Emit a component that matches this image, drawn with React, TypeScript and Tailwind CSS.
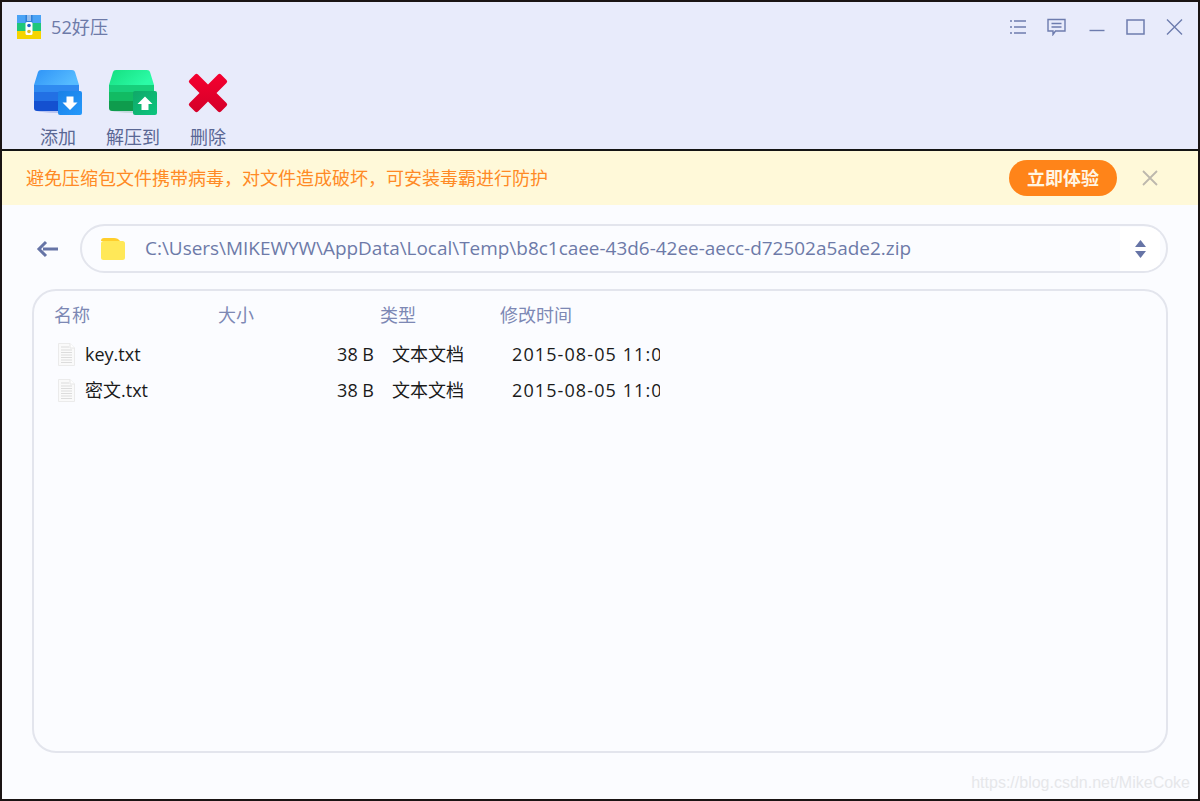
import React from "react";

const font = { fontFamily: '"Open Sans", "Noto Sans CJK SC", sans-serif' };

function AppLogo() {
  return (
    <svg width="24" height="24" viewBox="0 0 24 24">
      <rect x="0" y="0" width="24" height="8" fill="#4aa3f5" />
      <rect x="0" y="8" width="24" height="8" fill="#1fc77a" />
      <rect x="0" y="16" width="24" height="8" fill="#f5d400" />
      <rect x="8.5" y="0" width="7" height="8" fill="#2f7fd8" />
      <path d="M10 1h4M10 3h4M10 5h4" stroke="#ffffff" strokeWidth="1" />
      <rect x="8.5" y="7" width="7" height="13" rx="1.5" fill="#ffffff" />
      <circle cx="12" cy="10.5" r="1.8" fill="#2366c9" />
      <circle cx="12" cy="16.5" r="1.8" fill="#d9b92a" />
    </svg>
  );
}

function BoxIcon({ kind }: { kind: "add" | "extract" }) {
  const add = kind === "add";
  const id = kind;
  return (
    <svg width="50" height="48" viewBox="-1 0 50 48">
      <defs>
        <linearGradient id={id + "Top"} x1="0" y1="0" x2="1" y2="0.4">
          <stop offset="0" stopColor={add ? "#2e93f7" : "#16df80"} />
          <stop offset="1" stopColor={add ? "#56bbff" : "#2bfba6"} />
        </linearGradient>
        <linearGradient id={id + "Badge"} x1="0" y1="0" x2="1" y2="1">
          <stop offset="0" stopColor={add ? "#1a80e6" : "#10a868"} />
          <stop offset="1" stopColor={add ? "#2599fb" : "#0cc57e"} />
        </linearGradient>
      </defs>
      <ellipse cx="24" cy="40" rx="22" ry="3" fill={add ? "#b6c2f0" : "#c3d8dc"} />
      <path d="M4 2Q4.500 0 7 0H38Q40.500 0 41 2L45 15H0Z" fill={`url(#${id}Top)`} />
      <rect x="0" y="15" width="45" height="8" fill={add ? "#2f8af0" : "#17cf7b"} />
      <rect x="0" y="22" width="45" height="10" fill={add ? "#2270e4" : "#12bb63"} />
      <path d="M0 31H45V41H3Q0 41 0 38Z" fill={add ? "#1450d0" : "#0f9c4d"} />
      <rect x="24" y="21" width="24" height="24" rx="2" fill={`url(#${id}Badge)`} />
      {add ? (
        <path d="M32.500 26.500H39.500V32.500H43.500L36 40L28.500 32.500H32.500Z" fill="#ffffff" />
      ) : (
        <path d="M36 26.500L43.500 34H39.500V40H32.500V34H28.500Z" fill="#ffffff" />
      )}
    </svg>
  );
}

function DeleteIcon() {
  return (
    <svg width="42" height="42" viewBox="0 1 42 42">
      <defs>
        <linearGradient id="delGrad" x1="0" y1="0" x2="0" y2="1">
          <stop offset="0" stopColor="#f5002f" />
          <stop offset="1" stopColor="#d40029" />
        </linearGradient>
      </defs>
      <path
        d="M8 2.500Q9.500 1 11 2.500L21 12.500L31 2.500Q32.500 1 34 2.500L39.500 8Q41 9.500 39.500 11L29.500 21L39.500 31Q41 32.500 39.500 34L34 39.500Q32.500 41 31 39.500L21 29.500L11 39.500Q9.500 41 8 39.500L2.500 34Q1 32.500 2.500 31L12.500 21L2.500 11Q1 9.500 2.500 8Z"
        fill="url(#delGrad)"
      />
    </svg>
  );
}

function WindowButtons() {
  const c = "#6d7cae";
  return (
    <div className="flex items-center">
      <svg width="18" height="16" viewBox="0 0 18 16" fill="none" stroke={c} strokeWidth="1.300">
        <path d="M1 2h2M5 2h12M1 8h2M5 8h12M1 14h2M5 14h12" />
      </svg>
      <svg className="ml-[20px]" width="19" height="18" viewBox="0 0 19 18" fill="none" stroke={c} strokeWidth="1.400">
        <path d="M1 1.500H18V13H8.500L6 16.500V13H1Z" />
        <path d="M4.500 5.500H14.500M4.500 9H14.500" />
      </svg>
      <svg className="ml-[23px]" width="16" height="16" viewBox="0 0 16 16" fill="none" stroke={c} strokeWidth="1.400">
        <path d="M0.500 11.500H15.500" />
      </svg>
      <svg className="ml-[21px]" width="19" height="16" viewBox="0 0 19 16" fill="none" stroke={c} strokeWidth="1.500">
        <rect x="1" y="1" width="17" height="14" />
      </svg>
      <svg className="ml-[21px]" width="17" height="16" viewBox="0 0 17 16" fill="none" stroke={c} strokeWidth="1.400">
        <path d="M1 0.500L16 15.500M16 0.500L1 15.500" />
      </svg>
    </div>
  );
}

function FileIcon() {
  return (
    <svg width="17" height="23" viewBox="0 0 17 23" className="shrink-0">
      <path d="M0.500 0.500H12L16.500 5V22.500H0.500Z" fill="#fafafa" stroke="#ebebeb" />
      <path d="M12 0.500V5H16.500" fill="#ffffff" stroke="#e6e6e6" />
      <path d="M3 4H11M3 7H14M3 9.500H14M3 12H14M3 14.500H14M3 17H14M3 19.500H14" stroke="#dcdcdc" strokeWidth="1.200" />
    </svg>
  );
}

const tools = [
  { label: "添加", icon: <BoxIcon kind="add" />, w: "w-[50px] ml-[31px]" },
  { label: "解压到", icon: <BoxIcon kind="extract" />, w: "w-[54px] ml-[23px]" },
  { label: "删除", icon: <DeleteIcon />, w: "w-[50px] ml-[23px]" },
];

const files = [
  { name: "key.txt", size: "38 B", type: "文本文档", time: "2015-08-05 11:03" },
  { name: "密文.txt", size: "38 B", type: "文本文档", time: "2015-08-05 11:04" },
];

export default function App() {
  return (
    <div
      style={font}
      className="relative flex h-[801px] w-[1200px] flex-col overflow-hidden border-2 border-[#1a1414] bg-[#fbfcff]"
    >
      {/* title bar + toolbar */}
      <header className="h-[147px] shrink-0 bg-[#e8ebfb]">
        <div className="flex items-center pl-[15px] pr-[15px] pt-[10px]">
          <AppLogo />
          <span className="ml-[10px] mt-[1px] text-[18.200px] leading-[28px] text-[#6d7aa8]">52好压</span>
          <div className="ml-auto">
            <WindowButtons />
          </div>
        </div>
        <div className="mt-[29px] flex">
          {tools.map((t) => (
            <div key={t.label} className={`flex flex-col items-center ${t.w}`}>
              <div className="flex h-[48px] items-center justify-center">{t.icon}</div>
              <span className="mt-[7px] whitespace-nowrap text-[18px] leading-[24px] text-[#5a6794]">{t.label}</span>
            </div>
          ))}
        </div>
      </header>
      <div className="h-[2px] shrink-0 bg-[#141414]" />

      {/* banner */}
      <div className="flex h-[54px] shrink-0 items-center bg-[#fff9d9] pl-[24px]">
        <span className="pt-[1px] text-[18px] text-[#ff8a25]">避免压缩包文件携带病毒，对文件造成破坏，可安装毒霸进行防护</span>
        <button className="ml-auto flex h-[36px] w-[108px] items-center justify-center rounded-full bg-[#ff8419] pt-[1px] text-[18px] font-semibold text-[#fff6e4]">
          立即体验
        </button>
        <svg className="ml-[25px] mr-[40px]" width="16" height="16" viewBox="0 0 16 16" fill="none" stroke="#bdb8ad" strokeWidth="1.800">
          <path d="M1 1L15 15M15 1L1 15" />
        </svg>
      </div>

      {/* path bar */}
      <div className="mt-[19px] flex items-center pl-[34px] pr-[30px]">
        <svg width="22" height="20" viewBox="0 0 22 20" fill="none" stroke="#6674a6" strokeWidth="3">
          <path d="M10 3L3 10L10 17" />
          <path d="M7 10H22" />
        </svg>
        <div className="ml-[22px] flex h-[49px] flex-1 items-center overflow-hidden rounded-full border-2 border-[#e3e5ed] pl-[19px]">
          <svg width="24" height="22" viewBox="0 0 24 22">
            <path d="M0 3Q0 0 3 0H13Q17 0 19 3H0Z" fill="#ffce2b" />
            <rect x="0" y="3" width="24" height="19" rx="2.500" fill="#ffe858" />
          </svg>
          <span className="ml-[20px] whitespace-nowrap text-[18.950px] text-[#6d7aa8]">
            C:\Users\MIKEWYW\AppData\Local\Temp\b8c1caee-43d6-42ee-aecc-d72502a5ade2.zip
          </span>
          <div className="ml-auto mr-[6px] flex h-[44px] w-[40px] flex-col items-center justify-center gap-[4px] bg-white">
            <svg width="11" height="7" viewBox="0 0 11 7"><path d="M5.500 0L11 7H0Z" fill="#6674a6" /></svg>
            <svg width="11" height="7" viewBox="0 0 11 7"><path d="M0 0H11L5.500 7Z" fill="#6674a6" /></svg>
          </div>
        </div>
      </div>

      {/* file list */}
      <div className="ml-[30px] mr-[30px] mt-[16px] h-[464px] rounded-[24px] border-2 border-[#e3e5ed] pl-[20px] pt-[11px]">
        <div className="flex text-[18px] leading-[26px] text-[#7d88b4]">
          <span className="w-[164px]">名称</span>
          <span className="w-[162px]">大小</span>
          <span className="w-[120px]">类型</span>
          <span>修改时间</span>
        </div>
        <div className="mt-[13px] flex w-[606px] flex-col gap-[10px] overflow-hidden text-[18px] leading-[26px] text-[#1a1a1a]">
          {files.map((f) => (
            <div key={f.name} className="flex h-[26px] items-center">
              <div className="ml-[4px] flex w-[180px] shrink-0 items-center">
                <FileIcon />
                <span className="ml-[10px]">{f.name}</span>
              </div>
              <span className="w-[136px] shrink-0 text-right">{f.size}</span>
              <span className="ml-[18px] w-[120px] shrink-0 whitespace-nowrap">{f.type}</span>
              {/* the reference clips the time column, so this stays cut at the row edge */}
              <span className="shrink-0 whitespace-nowrap tracking-[1.100px]">{f.time}</span>
            </div>
          ))}
        </div>
      </div>

      {/* watermark */}
      <span className="absolute bottom-[4px] right-[8px] font-['Liberation_Sans'] text-[16px] leading-[24px] text-[#e6e7ea]">
        https://blog.csdn.net/MikeCoke
      </span>
    </div>
  );
}
